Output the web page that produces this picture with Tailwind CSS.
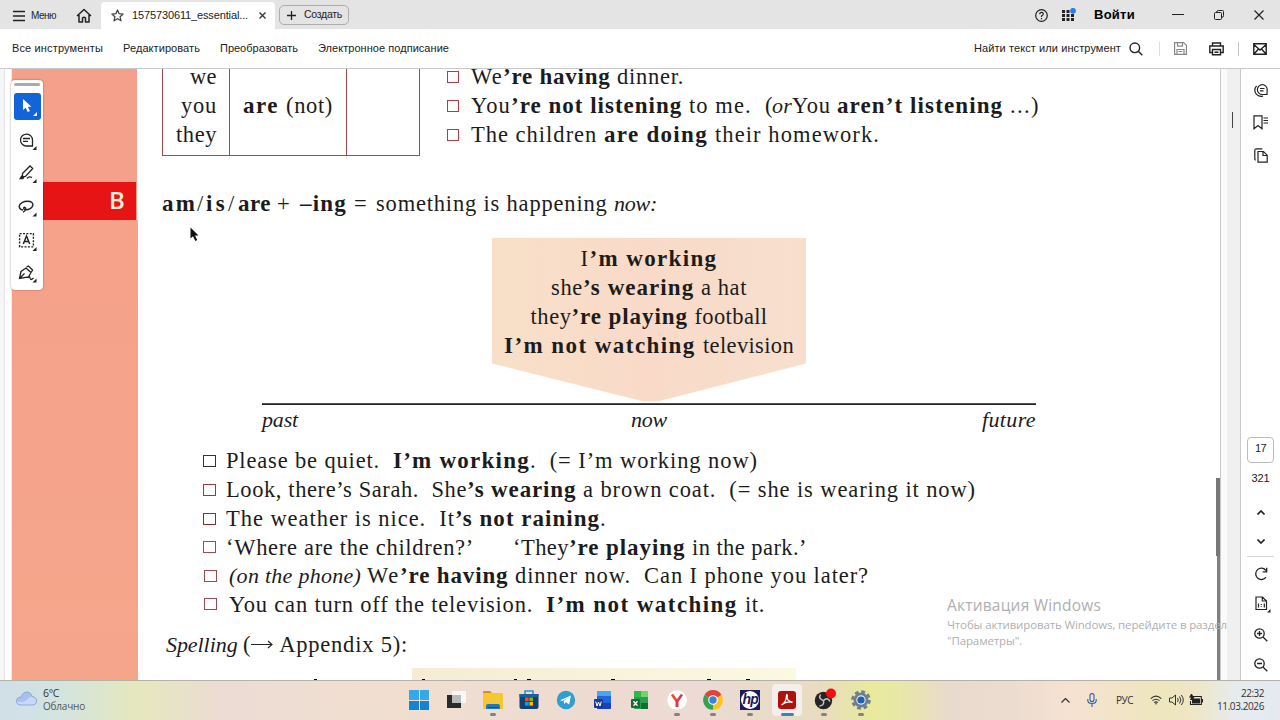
<!DOCTYPE html>
<html lang="ru">
<head>
<meta charset="utf-8">
<title>1575730611_essential</title>
<script src="https://cdn.jsdelivr.net/npm/@tailwindcss/browser@4"></script>
</head>
<body class="w-[1280px] h-[720px] overflow-hidden bg-white font-['Liberation_Sans',sans-serif] text-[#222] flex flex-col">

<!-- Tab bar -->
<header class="h-[29px] shrink-0 bg-[#e4e4e4] flex items-stretch text-[12px]">
  <div class="w-[101px] flex items-center pl-[13px] pt-[2px]">
    <svg class="w-3 h-3 mr-[6px]" viewBox="0 0 12 12" stroke="#222" stroke-width="1.5"><path d="M0 1.5h12M0 6h12M0 10.5h12"/></svg>
    <span data-w="25" class="text-[10px]">Меню</span>
    <svg class="w-4 h-4 ml-5" viewBox="0 0 16 16" fill="none" stroke="#222" stroke-width="1.5" stroke-linejoin="round"><path d="M1 8 8 1.5 15 8M3 7v7h3.5v-4q1.500-1.500 3 0v4H13V7"/></svg>
  </div>
  <div class="w-[174px] mt-[2px] bg-white rounded-t flex items-center pl-[10px]">
    <svg class="w-[13px] h-[13px] mr-2" viewBox="0 0 13 13" fill="none" stroke="#444" stroke-width="1.3" stroke-linejoin="round"><path d="M6.500 1l1.600 3.700 4 .4-3 2.700.9 4-3.500-2.100-3.500 2.100.9-4-3-2.700 4-.4z"/></svg>
    <span data-w="116" class="text-[11px]">1575730611_essential...</span>
    <svg class="w-[7px] h-[7px] ml-[11px]" viewBox="0 0 7 7" stroke="#333" stroke-width="1.300"><path d="M.5.5l6 6M6.500.5l-6 6"/></svg>
  </div>
  <div class="ml-[4px] mt-[5px] w-[70px] h-5 border border-[#adadad] rounded-[5px] flex items-center pl-[7px]">
    <svg class="w-[9px] h-[9px] mr-2" viewBox="0 0 9 9" stroke="#222" stroke-width="1.300"><path d="M0 4.500h9M4.500 0v9"/></svg>
    <span data-w="38" class="text-[10.5px]">Создать</span>
  </div>
  <div class="ml-auto w-[245px] flex items-center pt-[1px]">
    <svg class="w-[13px] h-[13px]" viewBox="0 0 13 13" fill="none" stroke="#222" stroke-width="1.200"><circle cx="6.500" cy="6.500" r="5.800"/><path d="M4.700 5.200q0-1.800 1.800-1.800t1.800 1.600q0 1-1.800 2v.9M6.500 9v1.200"/></svg>
    <svg class="w-[14px] h-[14px] ml-[14px]" viewBox="0 0 14 14" fill="#222"><path d="M0 2h3v3H0zM4.500 2h3v3h-3zM0 6h3v3H0zM4.500 6h3v3h-3zM9 6h3v3H9zM0 10h3v3H0zM4.500 10h3v3h-3zM9 10h3v3H9z"/><circle cx="11" cy="2.800" r="2.900" fill="#2680eb"/></svg>
    <span data-w="41" class="ml-[18px] text-[13px] font-bold text-black">Войти</span>
    <svg class="w-3 h-3 ml-[37px]" viewBox="0 0 12 12" stroke="#222"><path d="M0 5.500h12"/></svg>
    <svg class="w-[10px] h-[10px] ml-[30px]" viewBox="0 0 10 10" fill="none" stroke="#222"><rect x=".5" y="2.500" width="7" height="7" rx="1"/><path d="M2.500 2.500q0-2 2-2h4q1 0 1 1v4q0 2-2 2"/></svg>
    <svg class="w-[10px] h-[10px] ml-[30px]" viewBox="0 0 10 10" stroke="#222" stroke-width="1.200"><path d="M.5.5l9 9M9.500.5l-9 9"/></svg>
  </div>
</header>

<!-- Command bar -->
<nav class="h-10 shrink-0 border-b border-[#c8c8c8] flex items-center text-[11px] pl-3">
  <span data-w="91">Все инструменты</span>
  <span data-w="77" class="ml-5">Редактировать</span>
  <span data-w="78" class="ml-5">Преобразовать</span>
  <span data-w="131" class="ml-5">Электронное подписание</span>
  <div class="ml-auto w-[306px] flex items-center">
    <span data-w="147">Найти текст или инструмент</span>
    <svg class="w-[14px] h-[14px] ml-2" viewBox="0 0 14 14" fill="none" stroke="#222" stroke-width="1.400"><circle cx="5.800" cy="5.800" r="4.800"/><path d="M9.300 9.300 13.300 13.300"/></svg>
    <div class="w-px h-[14px] bg-[#ddd] ml-[16px]"></div>
    <svg class="w-[13px] h-[13px] ml-[14px]" viewBox="0 0 13 13" fill="none" stroke="#888" stroke-width="1.200"><path d="M.6.6h9l2.800 2.800v9H.6zM3.500.6v3.500h5V.6M3 12.400V7.500h7v4.900M4.500 9.500h4"/></svg>
    <svg class="w-[15px] h-[14px] ml-[22px]" viewBox="0 0 15 14" fill="none" stroke="#222" stroke-width="1.400"><path d="M3.500 3.500V1h8v2.500M3 10.500H.8V4h13.400v6.500H12M3.500 7.500h8v5.300h-8zM5.500 10.200h4"/></svg>
    <div class="w-px h-[14px] bg-[#c4c4c4] ml-[14px]"></div>
    <svg class="w-[14px] h-[12px] ml-[14px]" viewBox="0 0 14 12" fill="none" stroke="#222" stroke-width="1.400"><path d="M.8.8h12.400v10.400H.8zM.8 1.500 7 7l6.200-5.500M1 11l4.500-5M13 11 8.500 6"/></svg>
  </div>
</nav>

<main class="relative h-[611px] shrink-0 flex overflow-hidden">
  <div class="w-3 shrink-0 border-r border-[#eee] flex"><div class="w-[5px] bg-[#f4f6f7] border-r border-[#e4e4e4]"></div></div>
  <!-- Page margin -->
  <div class="w-[125px] shrink-0 bg-[#f5a08a] flex flex-col">
    <div class="h-[113px]"></div>
    <div class="h-[38px] bg-[#e61414] w-[124px] flex items-center justify-end pr-3 pb-[3px] text-[#ffeedd] text-[24px] font-['Open_Sans',sans-serif] font-semibold"><span data-w="15">B</span></div>
    <div class="h-[460px] w-[126px] bg-linear-to-b from-[#f6a18a] to-[#f4a68b]"></div>
  </div>

  <!-- Page -->
  <article class="w-[1083px] shrink-0 h-full overflow-hidden font-['Liberation_Serif',serif] text-[22.5px] [&_b]:text-[23px] [&_em]:text-[22px] leading-[29px] text-[#1c1c1c] flex flex-col">
    <section class="flex h-[87px] shrink-0 pl-[25px]">
      <div class="w-[258px] h-[87px] border border-t-0 border-[#a8464a] flex">
        <div class="w-[67px] border-r border-[#a8464a] flex flex-col items-end pr-3 -mt-[7px] pt-0">
          <span class="h-[29px]" data-w="27">we</span><span class="h-[29px]" data-w="36">you</span><span class="h-[29px]" data-w="41">they</span>
        </div>
        <div class="w-[117px] border-r border-[#a8464a] pl-[13px] pt-[22px] flex"><b data-w="43">are </b><span data-w="47">(not)</span></div>
      </div>
      <div class="ml-[27px] -mt-[7px]">
        <div class="flex h-[29px] items-center"><i class="size-3 border border-[#b83a3e] mr-3 mt-px"></i><span data-w="32">We</span><b data-w="114">’re having </b><span data-w="67">dinner.</span></div>
        <div class="flex h-[29px] items-center"><i class="size-3 border border-[#b83a3e] mr-3 mt-px"></i><span data-w="40">You</span><b data-w="178">’re not listening </b><span data-w="76">to me.  </span><span data-w="7">(</span><em data-w="20">or</em><span data-w="45">You </span><b data-w="173">aren’t listening </b><span data-w="30">...)</span></div>
        <div class="flex h-[29px] items-center"><i class="size-3 border border-[#b83a3e] mr-3 mt-px"></i><span data-w="133">The children </span><b data-w="111">are doing </b><span data-w="165">their homework.</span></div>
      </div>
    </section>

    <div class="mt-[33px] pl-[25px] flex h-[29px] shrink-0"><b data-w="35">am</b><span data-w="9">/</span><b data-w="22">is</b><span data-w="10">/</span><b data-w="39">are </b><span data-w="23">+ </span><b data-w="54">–ing </b><span data-w="22">= </span><span data-w="238">something is happening </span><em data-w="43">now:</em></div>

    <section class="mt-[20px] ml-[125px] w-[774px] h-[197px] shrink-0 flex flex-col items-center">
      <div class="w-[314px] h-[165px] bg-linear-to-r from-[#f8e0c8] via-[#f9dac8] to-[#f7dfce] [clip-path:polygon(0_0,100%_0,100%_76%,53%_99%,48%_99%,0_76%)] pt-[6px] flex flex-col items-center">
        <div class="flex"><span data-w="9">I</span><b data-w="128">’m working</b></div>
        <div class="flex"><span data-w="32">she</span><b data-w="118">’s wearing </b><span data-w="46">a hat</span></div>
        <div class="flex"><span data-w="41">they</span><b data-w="123">’re playing </b><span data-w="73">football</span></div>
        <div class="flex"><b data-w="199">I’m not watching </b><span data-w="91">television</span></div>
      </div>
      <div class="w-full h-[2px] bg-[#555] border-b border-[#222]"></div>
      <div class="w-full flex justify-between h-[29px]"><em data-w="36">past</em><em data-w="36" class="ml-[18px]">now</em><em data-w="54">future</em></div>
    </section>

    <section class="mt-[11px] pl-[66px] flex flex-col shrink-0">
      <div class="flex h-[29px] items-center"><i class="w-[13px] h-3 border border-[#333] mr-[10px]"></i><span data-w="167">Please be quiet.  </span><b data-w="137">I’m working</b><span data-w="228">.  (= I’m working now)</span></div>
      <div class="flex h-[29px] items-center"><i class="w-[13px] h-3 border border-[#a8353a] mr-[10px]"></i><span data-w="241">Look, there’s Sarah.  She</span><b data-w="116">’s wearing </b><span data-w="393">a brown coat.  (= she is wearing it now)</span></div>
      <div class="flex h-[29px] items-center"><i class="w-[13px] h-3 border border-[#8f2a30] mr-[10px]"></i><span data-w="229">The weather is nice.  It</span><b data-w="145">’s not raining</b><span data-w="5">.</span></div>
      <div class="flex h-[28px] items-center"><i class="w-[13px] h-3 border border-[#a3484c] mr-[10px]"></i><span data-w="248">‘Where are the children?’</span><span class="ml-[39px]" data-w="56">‘They</span><b data-w="123">’re playing </b><span data-w="115">in the park.’</span></div>
      <div class="flex h-[29px] items-center"><i class="w-[13px] h-3 border border-[#a3484c] mr-[12px] ml-px"></i><em data-w="138">(on the phone) </em><span data-w="33">We</span><b data-w="115">’re having </b><span data-w="354">dinner now.  Can I phone you later?</span></div>
      <div class="flex h-[28px] items-center"><i class="w-[13px] h-3 border border-[#a3484c] mr-[12px] ml-px"></i><span data-w="317">You can turn off the television.  </span><b data-w="199">I’m not watching </b><span data-w="20">it.</span></div>
    </section>

    <div class="mt-[12px] pl-[29px] flex h-[29px] shrink-0"><em data-w="77">Spelling </em><span data-w="7">(</span><svg class="w-[22px] h-[9px] mt-[10px] mx-px" viewBox="0 0 22 9" fill="none" stroke="#222" stroke-width="1.100"><path d="M0 4.500h21M17 1l4 3.500L17 8"/></svg><span data-w="134"> Appendix 5):</span></div>
    <div class="mt-[9px] flex h-3 shrink-0 items-end">
      <div class="w-[3px] h-px bg-black ml-[177px]"></div>
      <div class="ml-[95px] w-[384px] h-3 bg-linear-to-r from-[#f6ecd4] to-[#fbf9e2] flex items-end">
        <div class="w-[3px] h-px bg-black ml-[10px]"></div><div class="w-[3px] h-px bg-black ml-[89px]"></div><div class="w-[4px] h-px bg-black ml-[10px]"></div><div class="w-[4px] h-px bg-black ml-[80px]"></div><div class="w-[4px] h-px bg-black ml-[92px]"></div><div class="w-[4px] h-px bg-black ml-[35px]"></div>
      </div>
    </div>
  </article>

  <!-- Scrollbar -->
  <div class="w-[21px] shrink-0 bg-[#f0f0f0] border-x border-[#c9c9c9] flex"><div class="w-[6px] bg-[#fafafa]"></div><div class="w-px h-4 bg-[#444] mt-[43px] ml-[5px]"></div></div>

  <!-- Right rail -->
  <aside class="w-[39px] shrink-0 flex flex-col items-center text-[11px]">
    <svg class="w-[14px] h-[14px] mt-[14px]" viewBox="0 0 14 14" fill="none" stroke="#222" stroke-width="1.200"><path d="M13 11.500H8.300A4.900 4.900 0 1 1 13.200 6.500zM6 5.500h4.500M6 7.800h3.500M2.600 2.800Q-.3 6 1.500 10q2.500 4 7.500 3.200"/></svg>
    <svg class="w-[15px] h-[15px] mt-[18px]" viewBox="0 0 15 15" fill="none" stroke="#222" stroke-width="1.200"><path d="M1 .8h8v13L5 10.500 1 13.800zM10.500 3H15M10.500 5.500H15M10.500 8H15"/></svg>
    <svg class="w-[14px] h-[15px] mt-[18px]" viewBox="0 0 14 15" fill="none" stroke="#222" stroke-width="1.200"><path d="M4 3.500h5.500l3.700 3.700v7H4zM9 3.500v4h4M1.800 12Q.8 12 .8 10.500V2.300Q.8.800 2.300.8h6"/></svg>
    <div class="mt-[274px] w-[27px] h-[26px] border border-[#bbb] rounded-[4px] flex items-center justify-center pb-[3px]"><span data-w="11">17</span></div>
    <span class="mt-[7px] leading-[16px]" data-w="18">321</span>
    <svg class="w-2 h-[5px] mt-[24px]" viewBox="0 0 8 5" fill="none" stroke="#222" stroke-width="1.600"><path d="M.5 4.500 4 1l3.500 3.500"/></svg>
    <svg class="w-2 h-[5px] mt-[24px]" viewBox="0 0 8 5" fill="none" stroke="#222" stroke-width="1.600"><path d="M.5.5 4 4 7.500.5"/></svg>
    <div class="w-[27px] h-px bg-[#d5d5d5] mt-[12px]"></div>
    <svg class="w-[14px] h-[14px] mt-[10px]" viewBox="0 0 14 14" fill="none" stroke="#222" stroke-width="1.300"><path d="M12 10.200A5.700 5.700 0 1 1 12 3.500M12.700.8v4h-4"/></svg>
    <svg class="w-[16px] h-[17px] mt-[15px] ml-[4px]" viewBox="0 0 16 17" fill="none" stroke="#222" stroke-width="1.200"><path d="M1 1h6.500L11.500 5v8.500H1zM7.300 1v4h4M3.500 7.500v4M9.300 7.500v4M6.300 8v.9M6.300 10.200v.9"/><path d="M15.500 13v3.500H12z" fill="#222" stroke="none"/></svg>
    <svg class="w-[14px] h-[14px] mt-[15px]" viewBox="0 0 14 14" fill="none" stroke="#222" stroke-width="1.300"><circle cx="5.500" cy="5.500" r="4.700"/><path d="M9 9l4.300 4.300M3 5.500h5M5.500 3v5"/></svg>
    <svg class="w-[14px] h-[14px] mt-[16px]" viewBox="0 0 14 14" fill="none" stroke="#222" stroke-width="1.300"><circle cx="5.500" cy="5.500" r="4.700"/><path d="M9 9l4.300 4.300M3 5.500h5"/></svg>
  </aside>

  <!-- Scan edge shadow -->
  <div class="absolute left-[1216px] top-[409px] w-1 h-[78px] bg-[#777]"></div>
  <div class="absolute left-[1217px] top-[487px] w-[3px] h-[124px] bg-[#808080]"></div>

  <!-- Floating tool palette -->
  <div class="absolute left-[11px] top-[11px] w-8 h-[210px] bg-white rounded-[4px] shadow-[0_0_2px_rgba(0,0,0,.45)] flex flex-col items-center">
    <div class="w-[26px] h-[3px] bg-[#aaa] rounded-sm mt-[3px]"></div>
    <div class="w-[27px] h-[27px] bg-[#1264d8] rounded-[3px] mt-[7px] pt-[5px] pl-[7px]">
      <svg class="w-[20px] h-[20px]" viewBox="0 0 20 20" fill="#fff"><path d="M2 1v11l2.700-2.300 2 4.300 2.200-1-2-4.200H10.500zM16 14v4h-4z"/></svg>
    </div>
    <svg class="w-5 h-5 mt-[12px] ml-[1px]" viewBox="0 0 20 20" fill="none" stroke="#222" stroke-width="1.300"><path d="M14.500 8v6H7.500A6 6 0 1 1 14.500 8zM5 6.500h7M5 9.300h5"/><path d="M18.500 14v4h-4z" fill="#222" stroke="none"/></svg>
    <svg class="w-5 h-5 mt-[13px] ml-[1px]" viewBox="0 0 20 20" fill="none" stroke="#222" stroke-width="1.300"><path d="M4.500 8.500 12 1l2.700 2.500L7.500 11.500l-3 .5zM3 11.500l2 2M9 13.500q2-2.500 5 -1"/><path d="M18.500 14v4h-4zM1 14.200l2.500-4 3 2.500-1.500 1.500z" fill="#222" stroke="none"/></svg>
    <svg class="w-5 h-5 mt-[14px] ml-[1px]" viewBox="0 0 20 20" fill="none" stroke="#222" stroke-width="1.400"><path d="M5 11C2.500 10.500 1.200 9 1.200 7.200 1.200 4 6 2.300 9.500 2.300c4 0 6 2 5.300 4.200C14 9.500 10 11.200 7 10.600 5 10 5.500 7.800 7 8.400 8.500 9.300 7.500 12 5 13"/><path d="M18.500 13.500v4h-4z" fill="#222" stroke="none"/></svg>
    <svg class="w-5 h-5 mt-[13px] ml-[1px]" viewBox="0 0 20 20" fill="none" stroke="#222" stroke-width="1.400"><rect x="1.600" y="1.600" width="13.800" height="13.300" stroke-dasharray="2 1.400"/><path d="M5.300 12 8.500 4l3.200 8M6.300 9.500h4.400"/><path d="M18.500 15v4h-4z" fill="#222" stroke="none"/></svg>
    <svg class="w-5 h-5 mt-[13px] ml-[1px]" viewBox="0 0 20 20" fill="none" stroke="#222" stroke-width="1.300"><path d="M1.500 13.500 3 6.500 8 3l5 4.500-2.500 4.500zM1.500 13.500l5-5M8.500 2l2-1 4 4-1 2M10 13q1.500-3 2 0t3.500 0"/><path d="M18.500 13.500v4h-4z" fill="#222" stroke="none"/></svg>
  </div>

  <!-- Mouse pointer -->
  <svg class="absolute left-[190px] top-[158px] w-[10px] h-[15px]" viewBox="0 0 10 15" fill="#111"><path d="M.5.5v11L3 9.300l2.300 4.700 1.900-.9-2.200-4.600H8.500z"/></svg>

  <!-- Activation notice -->
  <div class="absolute left-[947px] top-[526px] font-['Open_Sans',sans-serif] text-[#b0b0b0] text-[11.5px] flex flex-col leading-[16px]">
    <span data-w="154" class="text-[15.500px] leading-5">Активация Windows</span>
    <span data-w="280" class="mt-[2px]">Чтобы активировать Windows, перейдите в раздел</span>
    <span data-w="75">"Параметры".</span>
  </div>
</main>

<!-- Taskbar -->
<footer class="h-10 shrink-0 border-t border-[#b5b0a8] bg-[linear-gradient(90deg,#d0dfe8_0,#d3e4e0_60px,#e5e8bd_135px,#ecdcd4_220px,#f0dfd0_370px,#eedcd2_560px,#ecdad4_700px,#e8dcc0_820px,#e9ea9c_872px,#e8e8a8_900px,#e8dacc_950px,#ecdcd0_1010px,#f5e2d2_1070px,#eee6bd_1160px,#eee6c6_1195px,#e6ebee_1235px,#e4eaf0_1280px)] flex items-center pb-[1px] font-['Open_Sans',sans-serif] text-[11px] text-[#333]">
  <div class="w-[409px] pl-4 flex items-center gap-[6px]">
    <svg class="w-[21px] h-[15px] -mt-[3px]" viewBox="0 0 21 15"><path d="M5 14q-4.500 0-4.500-4T5 6.200Q6.500 1 11 1q4 0 5 4.500 4.500.5 4.500 4.500T16 14z" fill="#a9c0ee"/><path d="M5 14q-4.500 0-4.500-3.800 8 2.500 12-3 3-3.500 7.500 1Q21.500 14 16 14z" fill="#c9d8f8"/><path d="M5 14q-4.500 0-4.500-4T5 6.200Q6.500 1 11 1q4 0 5 4.500 4.500.5 4.500 4.500T16 14z" fill="none" stroke="#7d97d8" stroke-width=".7"/></svg>
    <div class="flex flex-col leading-[13px]"><span data-w="16" class="text-[10.5px]">6°C</span><span data-w="42" class="text-[#555] text-[10px]">Облачно</span></div>
  </div>
  <div class="flex items-center gap-[16.8px]">
    <div class="relative size-5 grid grid-cols-2 gap-px"><i class="bg-[#35a9e8]"></i><i class="bg-[#35a9e8]"></i><i class="bg-[#1583d2]"></i><i class="bg-[#1583d2]"></i></div>
    <svg class="size-5" viewBox="0 0 20 20"><path d="M1 5h14v13H1z" fill="#2a2a2a"/><path d="M6 1h14v12H6z" fill="#f8f8f8"/><path d="M6 5h9v8H6z" fill="#bbb"/></svg>
    <div class="relative"><svg class="size-5" viewBox="0 0 20 20"><path d="M0 2q0-1 1-1h6l2 2h-9z" fill="#d3911b"/><path d="M0 3h19q1 0 1 1v14q0 1-1 1H1q-1 0-1-1z" fill="#f5c731"/><path d="M3 19v-3q0-2 2-2h10q2 0 2 2v3z" fill="#1d78c0"/><path d="M5 17h10v1H5z" fill="#0c5595"/></svg><i class="absolute left-[7px] top-[23px] w-[6px] h-[3px] rounded bg-[#8a8078]"></i></div>
    <svg class="size-5" viewBox="0 0 20 20"><path d="M6 4V1h8v3" fill="none" stroke="#2b8fd0" stroke-width="1.500"/><path d="M.5 4h19v13q0 2-2 2h-15q-2 0-2-2z" fill="#17406e"/><path d="M.5 4h19v3H.5z" fill="#1c5f9d"/><path d="M6 7.500h3.600v3.600H6z" fill="#f25022"/><path d="M10.400 7.500H14v3.600h-3.600z" fill="#7fba00"/><path d="M6 12h3.600v3.600H6z" fill="#00a4ef"/><path d="M10.400 12H14v3.600h-3.600z" fill="#ffb900"/></svg>
    <svg class="size-5" viewBox="0 0 20 20"><circle cx="10" cy="10" r="9.200" fill="#2e9fd0"/><path d="M4 10.200 15 5.500l-1.800 9-3.300-2.300-1.700 1.700-.5-3 4.800-3.700-6 3.800z" fill="#fff"/></svg>
    <svg class="size-5" viewBox="0 0 20 20"><rect x="4" y="1" width="14" height="18" rx="1.500" fill="#2267d8"/><path d="M4 2q0-1 1-1h12q1 0 1 1v4H4z" fill="#48a5ee"/><path d="M4 13h14v5q0 1-1 1H5q-1 0-1-1z" fill="#1d3fb8"/><rect x="1" y="9" width="9" height="9" rx="1" fill="#143a9c"/><path d="M2.700 11.500 4 16l1.500-4L7 16l1.300-4.500" fill="none" stroke="#fff"/></svg>
    <svg class="size-5" viewBox="0 0 20 20"><rect x="4" y="1" width="14" height="18" rx="1" fill="#28a050"/><path d="M11 1h7v6h-7z" fill="#6bd66a"/><path d="M4 1h7v6H4z" fill="#35b54c"/><path d="M11 13h7v6h-7z" fill="#12702f"/><rect x="1" y="9" width="9" height="9" rx="1" fill="#156c38"/><path d="M3.500 11.300l4 4.500m0-4.500-4 4.500" stroke="#fff" stroke-width="1.300"/></svg>
    <div class="relative"><svg class="size-5" viewBox="0 0 20 20"><circle cx="10" cy="10" r="9.800" fill="#fff"/><path d="M5 4.500l5 7V17" fill="none" stroke="#f04a2a" stroke-width="2.600"/><path d="M15 4.500l-5 7V17" fill="none" stroke="#d83a58" stroke-width="2.600"/></svg><i class="absolute left-[7px] top-[23px] w-[6px] h-[3px] rounded bg-[#8a8078]"></i></div>
    <div class="relative"><svg class="size-5" viewBox="0 0 20 20"><path d="M10 10 1.500 5A9.800 9.800 0 0 1 18.500 5z" fill="#dc4437"/><path d="M10 10 18.500 5A9.800 9.800 0 0 1 10 19.800z" fill="#fbc61c"/><path d="M10 10v9.800A9.800 9.800 0 0 1 1.500 5z" fill="#35a351"/><circle cx="10" cy="10" r="4.800" fill="#fff"/><circle cx="10" cy="10" r="3.700" fill="#3f7ee0"/></svg><i class="absolute left-[7px] top-[23px] w-[6px] h-[3px] rounded bg-[#8a8078]"></i></div>
    <div class="relative"><div class="size-5 bg-[#1a1a5c] flex items-center justify-center"><div class="size-[18px] rounded-full bg-white flex items-center justify-center text-[#1a1a5c] text-[14px] leading-none font-bold italic font-['Liberation_Sans',sans-serif] pb-[3px] tracking-[-1px]">hp</div></div><i class="absolute left-[7px] top-[23px] w-[6px] h-[3px] rounded bg-[#8a8078]"></i></div>
    <div class="relative size-5"><div class="absolute -left-[5px] -top-[6px] w-[30px] h-8 rounded bg-[#f5eeea]"></div><svg class="relative size-5" viewBox="0 0 20 20"><rect x="1" y="1" width="18" height="18" rx="3" fill="#b0100e"/><path d="M4.500 15q5-3 5-9.500 0-1.500.8-.3Q9 11 15.500 12.500M5.500 14.300q4-2.800 10-2.300" fill="none" stroke="#fff" stroke-width="1.300"/></svg><i class="absolute left-[4px] top-[23px] w-[13px] h-[3px] rounded bg-[#2f86c8]"></i></div>
    <div class="relative"><svg class="size-5 overflow-visible" viewBox="0 0 20 20"><circle cx="9.500" cy="10.500" r="8.700" fill="#252525"/><path d="M9.500 10.500Q4 9 6.500 4.500M9.500 10.500q4-4 6.500 1M9.500 10.500q1 5-4 5.500" fill="none" stroke="#c8c8c8" stroke-width="1.500"/><circle cx="17" cy="3.500" r="5" fill="#f01010"/></svg><i class="absolute left-[7px] top-[23px] w-[6px] h-[3px] rounded bg-[#8a8078]"></i></div>
    <div class="relative"><svg class="size-5" viewBox="0 0 20 20"><circle cx="10" cy="10" r="7.500" fill="#6f7f90"/><circle cx="10" cy="10" r="8.400" fill="none" stroke="#6f7f90" stroke-width="2.800" stroke-dasharray="3.800 2.797"/><circle cx="10" cy="10" r="4.700" fill="#e6edf5"/><circle cx="10" cy="10" r="3.600" fill="#1f62ac"/></svg><i class="absolute left-[7px] top-[23px] w-[6px] h-[3px] rounded bg-[#8a8078]"></i></div>
  </div>
  <div class="ml-auto w-[219px] flex items-center">
    <svg class="w-[9px] h-[5px]" viewBox="0 0 9 5" fill="none" stroke="#333" stroke-width="1.200"><path d="M.5 4.500l4-4 4 4"/></svg>
    <svg class="w-[10px] h-[14px] ml-[17px]" viewBox="0 0 10 14" fill="none" stroke="#2b62a8" stroke-width="1.100"><rect x="3" y=".6" width="4" height="8" rx="2"/><path d="M.8 6v1.500q0 3 4.200 3t4.200-3V6M5 10.500V14"/></svg>
    <span data-w="17" class="ml-[19px] text-[10px]">РУС</span>
    <svg class="w-[12px] h-[10px] ml-[17px]" viewBox="0 0 12 10" fill="none" stroke="#333" stroke-width="1.100"><path d="M.7 3.700q5.300-5 10.600 0M2.500 5.700q3.500-3 7 0M4.200 7.600q1.800-1.500 3.600 0"/><circle cx="6" cy="8.800" r=".8" fill="#333" stroke="none"/></svg>
    <svg class="w-[15px] h-[12px] ml-[7px]" viewBox="0 0 15 12" fill="none" stroke="#333" stroke-width="1"><path d="M.5 4H3l3.500-3v10L3 8H.5zM8.500 4q1.500 2 0 4M10.500 2.500q2.800 3.500 0 7M12.300 1q4 5 0 10"/></svg>
    <svg class="w-[14px] h-[12px] ml-[5px]" viewBox="0 0 14 12" fill="#222"><path d="M3 4.500h8v5H3zM12.500 5h1.500v3.500h-1.500zM2 0h1l1 2h2L3.500 6H1l1-2.500H0z"/><path d="M5 2.500h7.300v8H1.500V7" fill="none" stroke="#222" stroke-width="1.100"/></svg>
    <div class="ml-auto mr-4 flex flex-col items-end leading-[13px] text-[10px]"><span data-w="23">22:32</span><span data-w="47">11.03.2026</span></div>
  </div>
</footer>

<script>
// Fit each text run to its measure by tracking.
function fitRuns() {
  document.querySelectorAll('[data-w]').forEach(function (el) {
    el.style.whiteSpace = 'pre';
    el.style.flexShrink = '0';
    el.style.display = 'block';
    el.style.letterSpacing = '0px';
    el.style.width = 'max-content';
    var target = +el.dataset.w;
    var natural = el.getBoundingClientRect().width;
    el.style.letterSpacing = ((target - natural) / el.textContent.length) + 'px';
    el.style.width = target + 'px';
  });
}
fitRuns();
window.addEventListener('load', function () {
  fitRuns();
  document.fonts.ready.then(fitRuns);
  requestAnimationFrame(fitRuns);
  setTimeout(fitRuns, 50);
});
</script>
</body>
</html>
